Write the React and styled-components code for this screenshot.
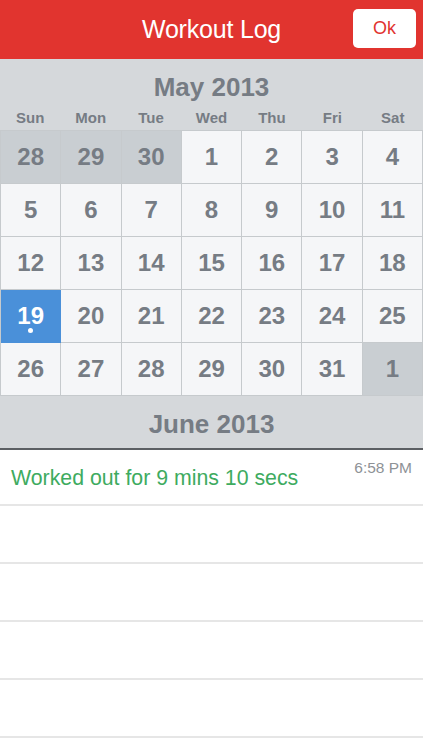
import React from 'react'
import styled, { createGlobalStyle } from 'styled-components'

const GlobalStyle = createGlobalStyle`
  html, body {
    margin: 0;
    padding: 0;
    background: #ffffff;
    font-family: "Liberation Sans", Arial, sans-serif;
  }
`

const Page = styled.div`
  width: 423px;
  height: 750px;
  overflow: hidden;
  background: #ffffff;
`

const Header = styled.header`
  height: 59px;
  background: #e1342f;
  display: flex;
  align-items: center;
  justify-content: center;
  position: relative;
`

const Title = styled.h1`
  margin: 0;
  color: #ffffff;
  font-size: 25px;
  font-weight: 400;
  letter-spacing: -0.2px;
`

const OkButton = styled.button`
  position: absolute;
  right: 7px;
  top: 9px;
  width: 63px;
  height: 39px;
  border: none;
  border-radius: 5px;
  background: #ffffff;
  color: #e1342f;
  font-family: inherit;
  font-size: 18px;
`

const Calendar = styled.section`
  background: #d5d8db;
`

const MonthTitle = styled.div`
  height: ${p => p.h}px;
  display: flex;
  align-items: center;
  justify-content: center;
  color: #767c84;
  font-size: 26px;
  font-weight: 700;
  padding-top: ${p => p.pt || 0}px;
  box-sizing: border-box;
`

const DayNames = styled.div`
  display: grid;
  grid-template-columns: repeat(7, 1fr);
  height: 24px;
  align-items: center;
  padding-bottom: 1px;
  box-sizing: border-box;
`

const DayName = styled.span`
  text-align: center;
  color: #767c84;
  font-size: 15px;
  font-weight: 700;
`

const Grid = styled.div`
  display: grid;
  grid-template-columns: repeat(7, 1fr);
  grid-auto-rows: 53px;
  border-top: 1px solid #c6cacd;
  border-left: 1px solid #c6cacd;
`

const Cell = styled.div`
  position: relative;
  display: flex;
  align-items: center;
  justify-content: center;
  border-right: 1px solid #c6cacd;
  border-bottom: 1px solid #c6cacd;
  background: ${p => (p.selected ? '#4a90d9' : p.muted ? '#c9ced2' : '#f5f6f8')};
  color: ${p => (p.selected ? '#ffffff' : '#767c84')};
  font-size: 24px;
  font-weight: 700;
  ${p => p.selected && 'border-color: #4a90d9;'}
`

const Dot = styled.span`
  position: absolute;
  left: 50%;
  bottom: 9px;
  width: 5px;
  height: 5px;
  margin-left: -3px;
  border-radius: 50%;
  background: #ffffff;
`

const Divider = styled.div`
  height: 2px;
  background: #5c5f63;
`

const Entry = styled.div`
  height: ${p => p.h}px;
  border-bottom: 2px solid #e6e6e6;
  box-sizing: border-box;
  display: flex;
  justify-content: space-between;
  padding: 0 11px 0 11px;
`

const EntryText = styled.span`
  color: #3eab5f;
  font-size: 21.3px;
  margin-top: 16px;
`

const EntryTime = styled.span`
  color: #8e9296;
  font-size: 15.5px;
  margin-top: 9px;
`

const weeks = [
  [[28, 1], [29, 1], [30, 1], [1], [2], [3], [4]],
  [[5], [6], [7], [8], [9], [10], [11]],
  [[12], [13], [14], [15], [16], [17], [18]],
  [[19, 0, 1], [20], [21], [22], [23], [24], [25]],
  [[26], [27], [28], [29], [30], [31], [1, 1]],
]

const dayNames = ['Sun', 'Mon', 'Tue', 'Wed', 'Thu', 'Fri', 'Sat']

export default function App() {
  return (
    <Page>
      <GlobalStyle />
      <Header>
        <Title>Workout Log</Title>
        <OkButton>Ok</OkButton>
      </Header>
      <Calendar>
        <MonthTitle h={47} pt={10}>May 2013</MonthTitle>
        <DayNames>
          {dayNames.map(d => (
            <DayName key={d}>{d}</DayName>
          ))}
        </DayNames>
        <Grid>
          {weeks.flat().map(([n, muted, selected], i) => (
            <Cell key={i} muted={muted} selected={selected}>
              {n}
              {selected && <Dot />}
            </Cell>
          ))}
        </Grid>
        <MonthTitle h={52} pt={4}>June 2013</MonthTitle>
      </Calendar>
      <Divider />
      <Entry h={56}>
        <EntryText>Worked out for 9 mins 10 secs</EntryText>
        <EntryTime>6:58 PM</EntryTime>
      </Entry>
      <Entry h={58} />
      <Entry h={58} />
      <Entry h={58} />
      <Entry h={58} />
    </Page>
  )
}
